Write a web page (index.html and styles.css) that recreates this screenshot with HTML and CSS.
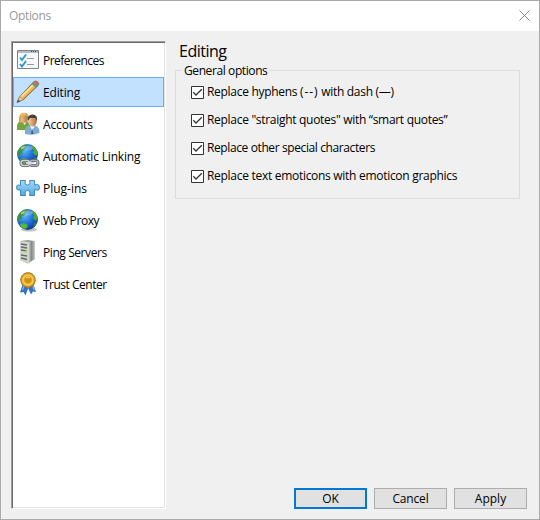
FILE: index.html
```html
<!DOCTYPE html>
<html lang="en">
<head>
<meta charset="utf-8">
<title>Options</title>
<link rel="stylesheet" href="styles.css">
</head>
<body>
<svg class="defs" width="0" height="0" aria-hidden="true">
  <defs>
    <radialGradient id="sea" cx=".35" cy=".3" r=".75"><stop offset="0" stop-color="#65baff"/><stop offset=".5" stop-color="#2476dd"/><stop offset="1" stop-color="#103594"/></radialGradient>
    <linearGradient id="steel"><stop offset="0" stop-color="#e2e2e2"/><stop offset=".5" stop-color="#858985"/><stop offset="1" stop-color="#b8bbb8"/></linearGradient>
    <linearGradient id="puzzle" x2="0" y2="1"><stop offset="0" stop-color="#a3dcfb"/><stop offset="1" stop-color="#51a7df"/></linearGradient>
    <radialGradient id="gold"><stop offset="0" stop-color="#e1a31b"/><stop offset=".45" stop-color="#d79412"/><stop offset=".65" stop-color="#f7d160"/><stop offset="1" stop-color="#c07b06"/></radialGradient>
    <linearGradient id="skin" x2="1"><stop offset="0" stop-color="#f7d1a5"/><stop offset="1" stop-color="#b16d3e"/></linearGradient>
    <g id="globe">
      <circle cx="11.5" cy="11.5" r="10.4" fill="url(#sea)"/>
      <path d="M3 6Q6 1.500 11 1.400L13 3L10 4L9 7L6 8L6.500 11L4 11L2 14Q0 10 3 6Z" fill="#3c9146"/>
      <path d="M5 4L9 3L8 5L5 7Z" fill="#8ccf60"/>
      <path d="M15 2Q20 4 22 10L20 13L17 10L18 7L15 5Z" fill="#48aa39"/>
      <path d="M4 16L8 15L12 17L11 20L8 21L5 19Z" fill="#50bb2e"/>
      <path d="M18 15L21 14L20 17L17 19Z" fill="#278642"/>
      <ellipse cx="11.500" cy="5" rx="5" ry="2.500" fill="#fff" opacity=".25"/>
    </g>
  </defs>
</svg>
<main class="window">
  <header class="titlebar">
    <span class="title">Options</span>
    <svg class="close" viewBox="0 0 11 11"><path d="M.5.5L10.500 10.500M10.500.5L.5 10.500"/></svg>
  </header>
  <div class="content">
    <nav class="list">
      <div class="item"><svg class="icon" viewBox="0 0 24 24">
        <path d="M1.500 2.500H22.500V20.500H1.500Z" fill="#f7f8fa" stroke="#7e8188"/><path d="M2 3H22V5H2Z" fill="#b7bac4"/><path d="M15 3.500H21" stroke="#545964" stroke-dasharray="1 1"/>
        <path d="M4 9.500L6 12L10 6.500M4 16L6 18.500L10 13" fill="none" stroke="#2897d4" stroke-width="1.900"/><path d="M11 10.500H18M11 16.500H18" stroke="#9297a9"/></svg><span class="t-pref">Preferences</span></div>
      <div class="item selected"><svg class="icon" viewBox="0 0 24 24">
        <path d="M1 22.500L3.500 17L17.500 2Q19.500.2 21.500 1.800T22 5.500L7.500 19.500Z" fill="#c48e40" stroke="#645747" stroke-width=".8"/><path d="M4.300 16.500L16.500 4L19.500 7L7 19Z" fill="#f2b94e"/><path d="M5 17L17.500 4.500" stroke="#ffe5a0" stroke-width="1.600"/><path d="M1.500 22L3.700 17.200L7 19.300Z" fill="#e9c9a0"/><path d="M1 22.500L2.300 19.800L4.300 21.300Z" fill="#444"/><path d="M15.700 4L17.300 2.300L21.500 6.200L20 7.800Z" fill="#5e9482"/><path d="M18 2Q19.500.5 21.500 2T21.800 5.400Z" fill="#d96565"/></svg><span class="t-edit">Editing</span></div>
      <div class="item"><svg class="icon" viewBox="0 0 24 24">
        <path d="M1 18Q0 10 5 9L11 9Q15 11 14 18Z" fill="#79a43d"/><path d="M6 9L8.500 13L11 9Z" fill="#fff"/><ellipse cx="8" cy="6" rx="4.200" ry="5" fill="url(#skin)"/><path d="M3 10Q2 1 8 .7Q13 .5 13 6L11 4L7 4L5 6V11Z" fill="#d3a747"/><path d="M5 4Q7 1 10 2" fill="none" stroke="#f5dc83"/>
        <path d="M9 22Q8 14 13 13.500H19Q24 15 23.500 21Q17 24 9 22Z" fill="#7eacd3"/><path d="M14 13.500L16 19L19 13.500Z" fill="#f7fbff"/><path d="M16 16L17.500 22H15Z" fill="#365f91"/><ellipse cx="16.500" cy="9" rx="4.300" ry="5.500" fill="url(#skin)"/><path d="M12 9Q11 2.500 16.500 2.500T21 9L19.500 6L14 6Z" fill="#4b4035"/></svg><span class="t-acc">Accounts</span></div>
      <div class="item"><svg class="icon" viewBox="0 0 24 24"><use href="#globe" transform="translate(0 -1)"/>
        <g fill="none"><rect x="5" y="16.500" width="8.500" height="5" rx="2.500" stroke="#5c6067" stroke-width="3"/><rect x="14" y="16.500" width="8" height="5" rx="2.500" stroke="#5c6067" stroke-width="3"/><rect x="5" y="16.500" width="8.500" height="5" rx="2.500" stroke="#d1d2d5" stroke-width="1.500"/><rect x="14" y="16.500" width="8" height="5" rx="2.500" stroke="#aeb0b5" stroke-width="1.500"/><path d="M10 19H18" stroke="#edeef0" stroke-width="1.600"/></g></svg><span class="t-auto">Automatic Linking</span></div>
      <div class="item"><svg class="icon" viewBox="0 0 24 24">
        <path d="M4.500 4.500H9.500L9 7Q9 9 11.500 9T14 7L13.500 4.500H18.500V9L20.500 8.500Q23.500 8 23.500 11.500T20.500 14L18.500 13.500V19.500H13.500L14 17Q14 14.500 11.500 14.500T9 17L9.500 19.500H4.500V14L2.500 14Q.4 14 .5 11.200T2.800 9L4.500 9.500Z" fill="url(#puzzle)" stroke="#347fb5" stroke-width=".9"/></svg><span class="t-plug">Plug-ins</span></div>
      <div class="item"><svg class="icon" viewBox="0 0 24 24"><ellipse cx="13" cy="21.500" rx="8" ry="2" fill="#aaa" opacity=".7"/><use href="#globe"/></svg><span class="t-web">Web Proxy</span></div>
      <div class="item"><svg class="icon" viewBox="0 0 24 24">
        <path d="M4 1L12 0L18.500 1V19L12 23.500L4 20Z" fill="#999d99"/><path d="M4 1L12 2V23L4 20Z" fill="#d1d4d1"/><path d="M12 2L18.500 1V19L12 23.500Z" fill="url(#steel)"/><path d="M5 4L11 5M5 7L11 8M5 10L11 11M5 15L11 16M5 18L11 19.500" stroke="#666a66" stroke-width="1.300"/><path d="M9 10.500H11V12.500H9Z" fill="#9de51d"/></svg><span class="t-ping">Ping Servers</span></div>
      <div class="item"><svg class="icon" viewBox="0 0 24 24">
        <path d="M7 11L4 20.500L7.500 20L9.500 23.500L13 14ZM17 11L20 20L17 19.500L15 22.500L11 14Z" fill="#3472c4"/><path d="M8 14L6.500 18M17 14L18 18" stroke="#78aeea" stroke-width="1.500"/><circle cx="12" cy="8" r="7.400" fill="url(#gold)" stroke="#a66b05" stroke-width=".8" stroke-dasharray="2.300 .6"/><circle cx="12" cy="7.800" r="4.300" fill="#d4910b" stroke="#fada70" stroke-width=".8"/><path d="M10 6Q12 4 14 6" fill="none" stroke="#ffe693"/></svg><span class="t-trust">Trust Center</span></div>
    </nav>
    <section class="panel">
      <h1>Editing</h1>
      <fieldset>
        <legend>General options</legend>
        <label><svg class="check" viewBox="0 0 13 13"><path class="box" d="M.5.5H12.500V12.500H.5Z"/><path class="tick" d="M2.300 6.200L5 9L10.800 3.200"/></svg><span class="c1">Replace hyphens <span class="hyphens">(--)</span> with dash (—)</span></label>
        <label><svg class="check" viewBox="0 0 13 13"><path class="box" d="M.5.5H12.500V12.500H.5Z"/><path class="tick" d="M2.300 6.200L5 9L10.800 3.200"/></svg><span class="c2">Replace "straight quotes" with “smart quotes”</span></label>
        <label><svg class="check" viewBox="0 0 13 13"><path class="box" d="M.5.5H12.500V12.500H.5Z"/><path class="tick" d="M2.300 6.200L5 9L10.800 3.200"/></svg><span class="c3">Replace other special characters</span></label>
        <label><svg class="check" viewBox="0 0 13 13"><path class="box" d="M.5.5H12.500V12.500H.5Z"/><path class="tick" d="M2.300 6.200L5 9L10.800 3.200"/></svg><span class="c4">Replace text emoticons with emoticon graphics</span></label>
      </fieldset>
      <footer><button class="primary">OK</button><button class="b2">Cancel</button><button class="b3">Apply</button></footer>
    </section>
  </div>
</main>
</body>
</html>
```
FILE: styles.css
```css
* { box-sizing: border-box; }
body { margin: 0; font: 12px/16px "Open Sans", "Noto Sans", sans-serif; color: #000; }
.defs { display: block; height: 0; }
.window { width: 540px; height: 520px; border: 1px solid #aaa; background: #f0f0f0; display: flex; flex-direction: column; }
.titlebar { height: 30px; background: #fff; display: flex; align-items: center; justify-content: space-between; padding: 0 9px 0 8px; color: #999; }
.title { letter-spacing: -.35px; }
.close { width: 11px; height: 11px; margin-bottom: 1px; fill: none; stroke: #888; }
.content { flex: 1; display: flex; padding: 10px 12px 10px 10px; }
.list { width: 155px; height: 468px; background: #fff; border: 1px solid; border-color: #a0a0a0 #fff #fff #a0a0a0; box-shadow: inset 1px 1px #696969, inset -1px -1px #e3e3e3; padding: 3px 1px; white-space: nowrap; display: flex; flex-direction: column; gap: 2px; }
.item { height: 30px; display: flex; align-items: center; gap: 3px; padding-left: 2px; border: 1px solid transparent; }
.item span { padding-top: 1px; }
.item.selected { background: #c2e0ff; border-color: #66afff; }
.icon { width: 24px; height: 24px; flex: none; }
.t-pref { letter-spacing: -.55px; }
.t-edit { letter-spacing: -.15px; }
.t-acc { letter-spacing: -.15px; }
.t-auto { letter-spacing: -.17px; }
.t-web, .t-ping { letter-spacing: -.42px; }
.t-trust { letter-spacing: -.5px; }
.panel { flex: 1; display: flex; flex-direction: column; padding-left: 9px; }
h1 { margin: 0 0 0 4px; font-size: 16px; font-weight: 400; line-height: 20px; letter-spacing: -.5px; }
fieldset { margin: 1px 7px 0 0; padding: 0 0 0 15px; border: 1px solid #dcdcdc; height: 137px; min-width: 0; }
legend { position: relative; top: 1px; margin-left: -9px; padding: 0 2px; letter-spacing: -.4px; }
label { height: 28px; display: flex; align-items: center; gap: 3px; white-space: nowrap; }
.check { width: 13px; height: 13px; fill: none; }
.box { fill: #fff; stroke: #333; }
.tick { stroke: #333; stroke-width: 1.300; }
.c1 { letter-spacing: -.3px; }
.hyphens { letter-spacing: .9px; }
.c2 { letter-spacing: -.3px; }
.c3 { letter-spacing: -.39px; }
.c4 { letter-spacing: -.29px; }
footer { margin-top: auto; display: flex; justify-content: flex-end; gap: 7px; }
button { width: 73px; height: 21px; padding: 0; font: inherit; background: #e1e1e1; border: 1px solid #adadad; color: #000; }
.primary { border: 2px solid #0078d7; }
.b2 { letter-spacing: -.15px; }
```
